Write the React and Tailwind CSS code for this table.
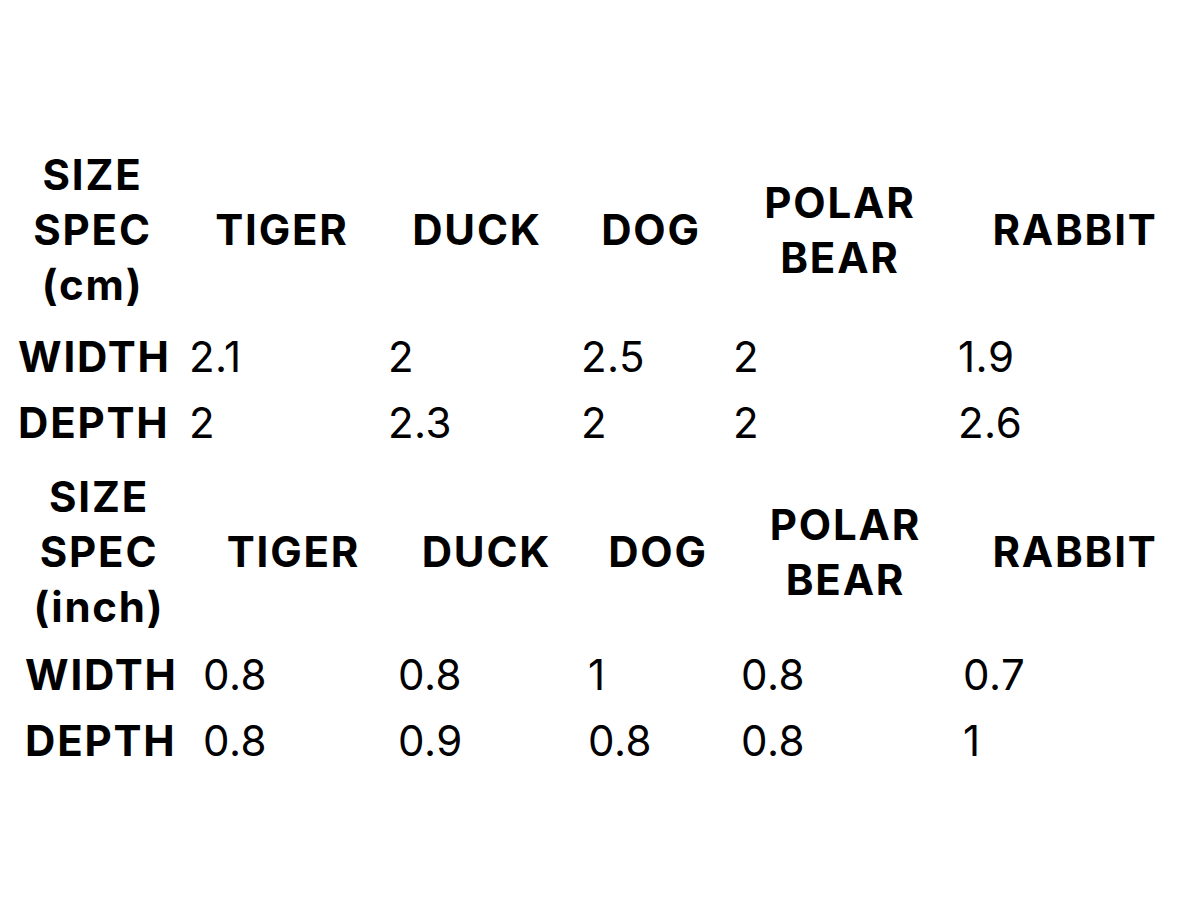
const animals = ['TIGER', 'DUCK', 'DOG', 'POLAR BEAR', 'RABBIT'];

const tables = [
  {
    unit: '(cm)',
    gridClass: 'grid grid-cols-[171px_199px_193px_152px_225px_234px] pl-[18px]',
    padClasses: ['pr-[22px]', 'pr-[13px]', 'pr-[15px]', 'pr-[12px]', 'pr-[11px]', ''],
    wrapClass: 'pt-[147px]',
    rowGap: 'mt-[12px]',
    rows: [
      { label: 'WIDTH', values: ['2.1', '2', '2.5', '2', '1.9'] },
      { label: 'DEPTH', values: ['2', '2.3', '2', '2', '2.6'] },
    ],
  },
  {
    unit: '(inch)',
    gridClass: 'grid grid-cols-[178px_195px_190px_153px_222px_224px] pl-[25px]',
    padClasses: ['pr-[30px]', 'pr-[14px]', 'pr-[13px]', 'pr-[13px]', 'pr-[13px]', ''],
    wrapClass: 'pt-[13px]',
    rowGap: 'mt-[8px]',
    rows: [
      { label: 'WIDTH', values: ['0.8', '0.8', '1', '0.8', '0.7'] },
      { label: 'DEPTH', values: ['0.8', '0.9', '0.8', '0.8', '1'] },
    ],
  },
];

const SizeTable = ({ table }) => {
  const { unit, gridClass, padClasses, wrapClass, rowGap, rows } = table;

  return (
    <div className={wrapClass}>
      {/* header */}
      <div className={gridClass}>
        <div className={`flex flex-col items-center justify-center text-center font-bold tracking-[1.8px] leading-[55px] ${padClasses[0]}`}>
          <span>SIZE</span>
          <span>SPEC</span>
          <span>{unit}</span>
        </div>
        {animals.map((name, i) => (
          <div
            key={name}
            className={`flex flex-col items-center justify-center text-center font-bold tracking-[1.8px] leading-[55px] ${padClasses[i + 1]}`}
          >
            {name.split(' ').map((word) => (
              <span key={word}>{word}</span>
            ))}
          </div>
        ))}
      </div>

      <div className={rowGap}>
        {rows.map((row) => (
          <div key={row.label} className={`${gridClass} leading-[66px]`}>
            <div className={`text-center font-bold tracking-[1.8px] ${padClasses[0]}`}>{row.label}</div>
            {row.values.map((value, i) => (
              <div key={i} className="font-normal tracking-[0.5px]">{value}</div>
            ))}
          </div>
        ))}
      </div>
    </div>
  );
};

const App = () => {
  return (
    <div className="min-h-[921px] w-[1200px] bg-white text-black text-[42px] font-['Inter',sans-serif]">
      {tables.map((table) => (
        <SizeTable key={table.unit} table={table} />
      ))}
    </div>
  );
};

export default App;
